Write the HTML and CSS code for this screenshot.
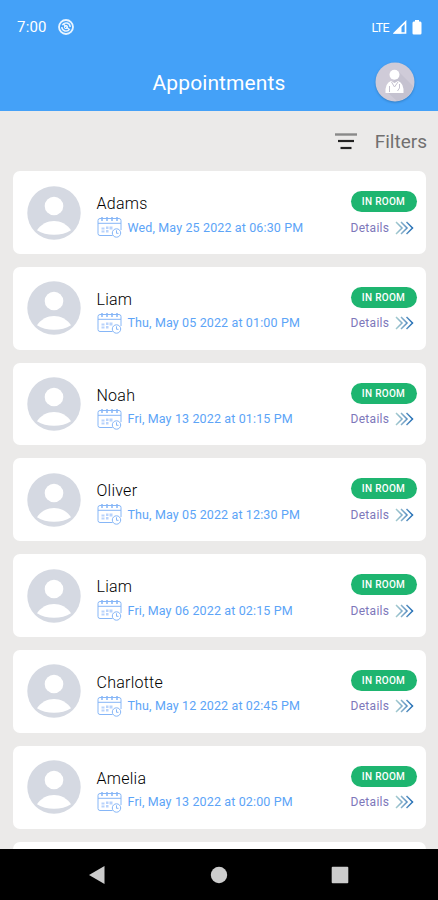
FILE: index.html
```html
<!DOCTYPE html>
<html lang="en">
<head>
<meta charset="utf-8">
<title>Appointments</title>
<link rel="stylesheet" href="styles.css">
</head>
<body>
<svg class="defs" width="0" height="0" aria-hidden="true">
  <defs>
    <linearGradient id="fade" gradientUnits="userSpaceOnUse" x1="0" y1="0" x2="19" y2="0"><stop offset="0" stop-color="#a9d0cf"/><stop offset=".5" stop-color="#719fc7"/><stop offset="1" stop-color="#1265b2"/></linearGradient>
    <symbol id="person" viewBox="0 0 54 54">
      <circle cx="27" cy="27" r="26.7" fill="#d5d9e2"/>
      <circle cx="27" cy="20" r="9.3" fill="#fff"/>
      <path d="M10 44.2C18 31.800 36 31.800 44 44.200C35 50.200 19 50.200 10 44.200Z" fill="#fff"/>
    </symbol>
    <symbol id="calendar" viewBox="0 0 25 22">
      <g fill="none" stroke="#86b6f7" stroke-width="1">
        <path d="M15.500 19.500H3Q1 19.500 1 17.500V4.500Q1 2.500 3 2.500H22Q24 2.500 24 4.500V14M1 7.300H24"/>
        <path d="M5 1V5M10 1V5M15 1V5M20 1V5" stroke-width="1.500"/>
        <circle cx="19.500" cy="17" r="4.200" fill="#fff"/>
        <path d="M19.500 14.300V17.300H21.500"/>
      </g>
      <path d="M4.500 11.500h3v2h-3zM4.500 14.500h3v2h-3zM9 10.500h2.500v2.500H9zM9 14h2.500v2.500H9zM12.500 10.500h3v3h-3z" fill="#b9d3fb"/>
    </symbol>
    <symbol id="chevrons" viewBox="0 0 19 14">
      <path d="M1 1L7 7L1 13M6 1L12 7L6 13M11.500 1L17.500 7L11.500 13" fill="none" stroke="url(#fade)" stroke-width="1.500"/>
    </symbol>
  </defs>
</svg>
<div class="screen">
  <header class="top">
    <div class="status">
      <span class="clock">7:00</span>
      <svg class="sync" viewBox="0 0 16 16" fill="none" stroke="#e8f4ff"><circle cx="8" cy="8" r="7" stroke-width="1.800"/><path d="M4.300 6.200A4.200 4.200 0 0 1 12.200 8M11.700 9.800A4.200 4.200 0 0 1 3.800 8M5 4.500L11.500 11" stroke-width="1.500"/><circle cx="8" cy="8" r="1.700" stroke-width="1"/></svg>
      <span class="net">LTE</span>
      <svg class="signal" viewBox="0 0 14 14"><path d="M1.500 13H12.500V2Z" fill="none" stroke="#fff" stroke-width="1.700"/><path d="M1 13.500L8.500 6V13.500Z" fill="#fff"/></svg>
      <svg class="battery" viewBox="0 0 10 15"><path d="M3 0H7V1.500H8.200Q9.500 1.500 9.500 3V13.200Q9.500 14.500 8.200 14.500H1.800Q.5 14.500.5 13.200V3Q.5 1.500 1.800 1.500H3Z" fill="#fff"/></svg>
    </div>
    <div class="bar">
      <h1>Appointments</h1>
      <svg class="doctor" viewBox="0 0 40 40"><circle cx="20" cy="20" r="19.500" fill="#cfcbd8"/><path d="M24 10L38 24Q36 36 22 39L12 30Z" fill="#c5c2d0"/><circle cx="19.500" cy="12.700" r="5" fill="#fff"/><path d="M10.500 31Q10 21 16 19L19.500 21L23 19Q29 21 28.500 31Z" fill="#fff"/><path d="M16.500 20L19.500 25L23 20M14.500 24V30M24.500 22V26L22.500 29" fill="none" stroke="#c6c2d0"/></svg>
    </div>
  </header>
  <main class="content">
    <div class="filters">
      <svg viewBox="0 0 22 17"><path d="M0 1.500H22" stroke="#898989" stroke-width="2.400"/><path d="M3 8H19" stroke="#222" stroke-width="2.200"/><path d="M5.500 15H16.500" stroke="#222" stroke-width="2.200"/></svg>
      <span>Filters</span>
    </div>
    <div class="list">
      <article class="card"><svg class="avatar"><use href="#person"/></svg><div class="info"><h2>Adams</h2><p><svg class="cal"><use href="#calendar"/></svg><span>Wed, May 25 2022 at 06:30 PM</span></p></div><div class="side"><b>IN ROOM</b><a>Details <svg><use href="#chevrons"/></svg></a></div></article>
      <article class="card"><svg class="avatar"><use href="#person"/></svg><div class="info"><h2>Liam</h2><p><svg class="cal"><use href="#calendar"/></svg><span>Thu, May 05 2022 at 01:00 PM</span></p></div><div class="side"><b>IN ROOM</b><a>Details <svg><use href="#chevrons"/></svg></a></div></article>
      <article class="card"><svg class="avatar"><use href="#person"/></svg><div class="info"><h2>Noah</h2><p><svg class="cal"><use href="#calendar"/></svg><span>Fri, May 13 2022 at 01:15 PM</span></p></div><div class="side"><b>IN ROOM</b><a>Details <svg><use href="#chevrons"/></svg></a></div></article>
      <article class="card"><svg class="avatar"><use href="#person"/></svg><div class="info"><h2>Oliver</h2><p><svg class="cal"><use href="#calendar"/></svg><span>Thu, May 05 2022 at 12:30 PM</span></p></div><div class="side"><b>IN ROOM</b><a>Details <svg><use href="#chevrons"/></svg></a></div></article>
      <article class="card"><svg class="avatar"><use href="#person"/></svg><div class="info"><h2>Liam</h2><p><svg class="cal"><use href="#calendar"/></svg><span>Fri, May 06 2022 at 02:15 PM</span></p></div><div class="side"><b>IN ROOM</b><a>Details <svg><use href="#chevrons"/></svg></a></div></article>
      <article class="card"><svg class="avatar"><use href="#person"/></svg><div class="info"><h2>Charlotte</h2><p><svg class="cal"><use href="#calendar"/></svg><span>Thu, May 12 2022 at 02:45 PM</span></p></div><div class="side"><b>IN ROOM</b><a>Details <svg><use href="#chevrons"/></svg></a></div></article>
      <article class="card"><svg class="avatar"><use href="#person"/></svg><div class="info"><h2>Amelia</h2><p><svg class="cal"><use href="#calendar"/></svg><span>Fri, May 13 2022 at 02:00 PM</span></p></div><div class="side"><b>IN ROOM</b><a>Details <svg><use href="#chevrons"/></svg></a></div></article>
      <article class="card"></article>
    </div>
  </main>
  <nav class="nav">
    <svg viewBox="0 0 18 20"><path d="M1 10L16.500 1V19Z" fill="#ccc"/></svg>
    <svg viewBox="0 0 18 20"><circle cx="9" cy="10" r="8.200" fill="#ccc"/></svg>
    <svg viewBox="0 0 18 20"><rect x=".7" y="1.700" width="16.600" height="16.600" rx="1" fill="#ccc"/></svg>
  </nav>
</div>
</body>
</html>
```
FILE: styles.css
```css
* { box-sizing: border-box; }
body { margin: 0; font-family: Roboto, "Liberation Sans", sans-serif; }
h1, h2, p { margin: 0; font-weight: 400; }
svg { display: block; flex: none; }
.defs { position: absolute; }
.screen { display: flex; flex-direction: column; width: 438px; height: 900px; overflow: hidden; background: #ebeae9; }
.top { flex: none; height: 111px; background: #44a1f8; color: #fff; }
.status { display: flex; align-items: center; height: 54px; padding: 0 16px 0 17px; }
.clock { width: 41px; font-size: 15px; letter-spacing: .2px; }
.sync { width: 16px; height: 16px; }
.net { margin-left: auto; font-size: 12.500px; letter-spacing: -.7px; }
.signal { width: 14px; height: 14px; margin-left: 4px; }
.battery { width: 10px; height: 15px; margin-left: 5px; }
.bar { display: grid; grid-template-columns: 63px 1fr 63px; align-items: center; height: 57px; }
.bar h1 { grid-column: 2; font-size: 21px; line-height: 28px; text-align: center; letter-spacing: .1px; }
.doctor { width: 40px; height: 40px; margin-top: -2px; filter: drop-shadow(0 1px 1px #317ec5); }
.content { flex: 1; min-height: 0; overflow: hidden; }
.filters { display: flex; align-items: center; justify-content: flex-end; gap: 18px; height: 60px; padding: 0 11px 0 0; font-size: 19px; color: #717070; }
.filters svg { width: 22px; height: 17px; }
.list { display: flex; flex-direction: column; gap: 13px; padding: 0 12px 0 12.500px; }
.card { display: flex; flex: none; height: 82.800px; padding: 0 9.500px 0 14px; border-radius: 7px; background: #fff; }
.avatar { width: 54px; height: 54px; margin-top: 14.500px; }
.info { margin-left: 16px; padding-top: 22px; flex: 1; }
.info h2 { font-size: 16px; line-height: 21px; font-weight: 300; letter-spacing: .25px; color: #000; }
.info p { display: flex; align-items: center; height: 22px; margin-top: 2px; font-size: 12.500px; color: #5ca4f7; letter-spacing: .13px; white-space: nowrap; }
.cal { width: 25px; height: 22px; margin-right: 6px; }
.side { width: 66px; padding-top: 20px; }
.side b { display: flex; align-items: center; justify-content: center; height: 21px; border-radius: 11px; background: #1eb570; color: #fff; font-size: 10px; font-weight: 500; letter-spacing: .3px; }
.side a { display: flex; align-items: center; justify-content: space-between; height: 20px; margin-top: 5.500px; padding-right: 3px; font-size: 12px; color: #7d77ba; letter-spacing: .3px; }
.side svg { width: 19px; height: 14px; }
.nav { display: flex; flex: none; height: 51px; padding: 0 89px 0 88px; align-items: center; justify-content: space-between; background: #000; }
.nav svg { width: 18px; height: 20px; }
```
